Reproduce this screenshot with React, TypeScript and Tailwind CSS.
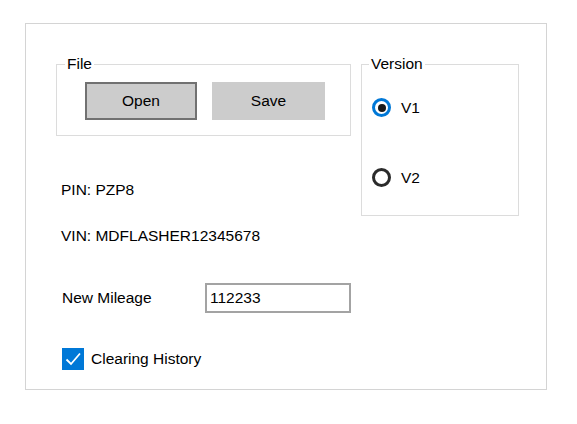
import React from "react";

export default function App() {
  const font = { fontFamily: '"Liberation Sans", Arial, sans-serif' };
  return (
    <div
      className="w-[577px] h-[424px] bg-white pt-[23px] pl-[25px] text-[15.5px] text-black"
      style={font}
    >
      <div className="w-[522px] h-[367px] border border-[#d4d4d4] flex pl-[30px] pt-[31px]">
        {/* Left column */}
        <div className="w-[295px] flex flex-col">
          <fieldset className="w-[295px] border border-[#dcdcdc]">
            <legend className="ml-[8px] px-[2px] leading-[18px]">File</legend>
            <div className="flex pl-[28px] pt-[9px] pb-[15px] gap-[15px]">
              <button className="w-[112px] h-[38px] bg-[#cccccc] border-2 border-[#717171] leading-none">
                Open
              </button>
              <button className="w-[113px] h-[38px] bg-[#cccccc] border-2 border-[#cccccc] leading-none">
                Save
              </button>
            </div>
          </fieldset>

          <div className="mt-[45px] pl-[5px] leading-[18px]">PIN: PZP8</div>
          <div className="mt-[28px] pl-[5px] leading-[18px]">VIN: MDFLASHER12345678</div>

          <div className="mt-[38px] flex items-center">
            <div className="w-[149px] pl-[6px] leading-[18px]">New Mileage</div>
            <div className="w-[146px] h-[30px] border-2 border-[#a3a3a3] flex items-center pl-[3px]">
              112233
            </div>
          </div>

          <div className="mt-[35px] pl-[6px] flex items-center gap-[7px]">
            <div className="w-[22px] h-[22px] bg-[#0078d7] flex items-center justify-center">
              <svg width="22" height="22" viewBox="0 0 22 22">
                <path d="M4.5 11.5 L9 16 L18 5.5" fill="none" stroke="white" strokeWidth="1.8" />
              </svg>
            </div>
            <span className="leading-[18px]">Clearing History</span>
          </div>
        </div>

        {/* Version */}
        <fieldset className="ml-[10px] w-[158px] h-[161px] border border-[#dcdcdc]">
          <legend className="ml-[7px] px-[2px] leading-[18px]">Version</legend>
          <div className="flex flex-col pl-[10px] pt-[25px] gap-[51px]">
            <div className="flex items-center gap-[10px] h-[19px]">
              <div className="w-[19px] h-[19px] rounded-full border-[3px] border-[#0078d7] flex items-center justify-center">
                <div className="w-[8px] h-[8px] rounded-full bg-[#1a1a1a]" />
              </div>
              <span className="leading-[18px]">V1</span>
            </div>
            <div className="flex items-center gap-[10px] h-[19px]">
              <div className="w-[19px] h-[19px] rounded-full border-[3px] border-[#2b2b2b]" />
              <span className="leading-[18px]">V2</span>
            </div>
          </div>
        </fieldset>
      </div>
    </div>
  );
}
